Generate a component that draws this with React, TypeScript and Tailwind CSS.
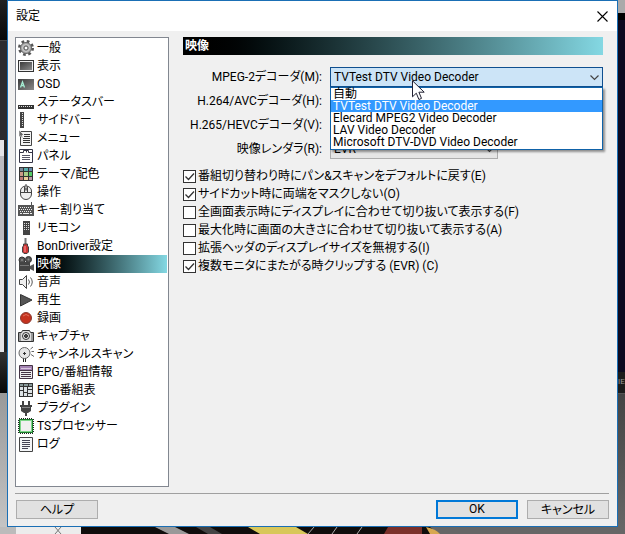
import { useState } from "react";
import type { ReactNode } from "react";

const pages: { label: string; icon: ReactNode }[] = [
  {
    label: "一般",
    icon: (
      <>
        <circle cx="8" cy="8" r="6.5" fill="none" stroke="#555" strokeWidth="3" strokeDasharray="2.6 2.5" />
        <circle cx="8" cy="8" r="5.5" fill="#aaa" stroke="#666" />
        <circle cx="8" cy="8" r="3.5" fill="none" stroke="#ccc" />
        <circle cx="8" cy="8" r="2" fill="#fff" stroke="#555" />
      </>
    ),
  },
  {
    label: "表示",
    icon: (
      <>
        <rect x="0.5" y="2.5" width="15" height="11" fill="#eee" stroke="#333" />
        <rect x="2" y="4" width="12" height="8" fill="url(#metal)" />
      </>
    ),
  },
  {
    label: "OSD",
    icon: (
      <>
        <rect y="3" width="16" height="11" fill="url(#metal)" />
        <path d="M2.500 11.500 4.500 6l2 5.500M3.200 9.700h2.600" fill="none" stroke="#a5eed4" strokeWidth="1.3" />
      </>
    ),
  },
  {
    label: "ステータスバー",
    icon: (
      <>
        <rect y="11" width="16" height="4" fill="#333" />
        <path d="M1 12.500h14" stroke="#ddd" strokeDasharray="1 1" />
      </>
    ),
  },
  {
    label: "サイドバー",
    icon: (
      <>
        <rect x="2" width="4" height="16" fill="#444" />
        <path d="M4.500 1v14" stroke="#ddd" strokeDasharray="1 1" />
      </>
    ),
  },
  {
    label: "メニュー",
    icon: (
      <>
        <path d="M2.500 1.500h11v14h-11z" fill="#f2f2f2" stroke="#444" />
        <path d="M6 4.500h6M6 6.500h6M5 8.500h7M5 10.500h7M5 12.500h7" stroke="#333" />
        <path d="m1 0 5 5-2 .3 1 2.200-1.200.5-1-2.200L1 7z" fill="#666" stroke="#fff" strokeWidth="0.6" />
      </>
    ),
  },
  {
    label: "パネル",
    icon: (
      <>
        <path d="M1.500 1.500h13v13h-13z" fill="#fff" stroke="#334" />
        <path d="M2 4.500h3.500v-2h5v2H14M8.500 2v2.500" fill="none" stroke="#334" />
        <path d="M4 7.500h8M4 9.500h8M4 11.500h8" stroke="#556" />
      </>
    ),
  },
  {
    label: "テーマ/配色",
    icon: (
      <>
        <rect x="1" y="1" width="14" height="14" fill="#333" />
        <path d="M2 2h3v3H2z" fill="#789" />
        <path d="M6 2h4v3H6z" fill="#5aa" />
        <path d="M11 2h3v3h-3z" fill="#68a" />
        <path d="M2 6h3v4H2z" fill="#c98" />
        <path d="M6 6h4v4H6z" fill="#ac8" />
        <path d="M11 6h3v4h-3z" fill="#5c6" />
        <path d="M2 11h3v3H2z" fill="#b77" />
        <path d="M6 11h4v3H6z" fill="#ec9" />
        <path d="M11 11h3v3h-3z" fill="#b9a" />
      </>
    ),
  },
  {
    label: "操作",
    icon: (
      <>
        <path d="M2.500 7a5.500 5 0 0 1 11 0v3a5.500 5.500 0 0 1-11 0z" fill="#eee" stroke="#444" />
        <path d="M2.500 8.500h11M6.500 2.500v6M9.500 2.500v6M8 0v2" fill="none" stroke="#444" />
        <path d="M8 3.500v3" stroke="#777" strokeWidth="2" />
      </>
    ),
  },
  {
    label: "キー割り当て",
    icon: (
      <>
        <path d="M13.500 4V0" stroke="#555" />
        <rect x="0" y="3" width="16" height="11" fill="#555" />
        <path d="M2 5.500h12M2 9.500h12" stroke="#eee" strokeDasharray="1 1" />
        <path d="M1 7.500h14" stroke="#eee" strokeDasharray="1 1" />
        <path d="M2 11.500h2M5 11.500h6M12 11.500h2" stroke="#eee" />
      </>
    ),
  },
  {
    label: "リモコン",
    icon: (
      <>
        <rect x="5" y="1" width="7" height="14" fill="#444" />
        <path d="M6 3.500h5M6 5.500h5M6 7.500h5M6 9.500h5" stroke="#ddd" strokeDasharray="1 1" />
      </>
    ),
  },
  {
    label: "BonDriver設定",
    icon: (
      <>
        <path d="M7.500 0v7" stroke="#777" strokeWidth="2" />
        <path d="M5.500 6h4v2l1 1v5l-1.500 1.500h-3L4.500 14V9l1-1z" fill="#c33" stroke="#444" />
        <path d="M7 8v6" stroke="#f99" />
      </>
    ),
  },
  {
    label: "映像",
    icon: (
      <>
        <circle cx="4" cy="4" r="3" fill="#555" stroke="#333" />
        <circle cx="10.500" cy="3.500" r="3" fill="#555" stroke="#333" />
        <path d="M1 6h11v9H1z" fill="#444" />
        <path d="m12 10 4-2v7l-4-2z" fill="#555" />
        <path d="M2 9.500h9" stroke="#777" />
        <circle cx="4" cy="4" r="1" fill="#888" />
        <circle cx="10.500" cy="3.500" r="1" fill="#888" />
      </>
    ),
  },
  {
    label: "音声",
    icon: (
      <>
        <path d="M1.500 5.500h3l4-4v13l-4-4h-3z" fill="#eee" stroke="#444" />
        <path d="M10.500 5.500q2 2.500 0 5M12.500 3.500q3.500 4.500 0 9" fill="none" stroke="#555" />
      </>
    ),
  },
  { label: "再生", icon: <path d="M2.500 2.500 14 8 2.500 14z" fill="#555" stroke="#333" /> },
  {
    label: "録画",
    icon: (
      <>
        <circle cx="8" cy="8" r="5.500" fill="#c5321e" stroke="#8a3a30" />
        <path d="M5 6q3-3 6 0" fill="none" stroke="#e0705a" />
      </>
    ),
  },
  {
    label: "キャプチャ",
    icon: (
      <>
        <path d="M.5 4.500h3l1-2h7l1 2h3v9H.5z" fill="#ddd" stroke="#333" />
        <path d="M2 5v8M14 5v8" stroke="#555" />
        <circle cx="8" cy="8" r="3.500" fill="#eee" stroke="#333" />
        <circle cx="8" cy="8" r="1.500" fill="#555" stroke="#222" />
      </>
    ),
  },
  {
    label: "チャンネルスキャン",
    icon: (
      <>
        <circle cx="6.500" cy="7" r="5.500" fill="#e6e6e6" stroke="#666" />
        <path d="M5 7.500h3M6.500 6v3" stroke="#333" />
        <path d="M5.500 12.500V16M7.500 12.500V16" stroke="#222" />
        <path d="m12.500 3 2.500-2M13.500 5.500H16M13 8.500l3 2" stroke="#666" />
      </>
    ),
  },
  {
    label: "EPG/番組情報",
    icon: (
      <>
        <path d="M1.500 1.500h13v13h-13z" fill="#eee" stroke="#434" />
        <path d="M2 2h12v4H2z" fill="#a584b4" />
        <path d="M1 6.500h14M3 8.500h10M3 10.500h10M3 12.500h10" stroke="#434" />
        <path d="M3 4.500h10" stroke="#d9c7e0" />
      </>
    ),
  },
  {
    label: "EPG番組表",
    icon: (
      <>
        <rect x="1" y="1" width="14" height="14" fill="#333" />
        <path d="M2 2h3v2H2zM6 2h4v2H6zM11 2h3v2h-3z" fill="#899" />
        <path d="M2 5h3v3H2zM2 9h3v5H2zM6 5h3v5H6zM6 11h3v3H6zM10 5h4v2h-4zM10 8h4v3h-4zM10 12h4v2h-4z" fill="#dde3e6" />
      </>
    ),
  },
  {
    label: "プラグイン",
    icon: (
      <>
        <path d="M5 1v4M11 1v4" stroke="#444" strokeWidth="2" />
        <path d="M2 5h12v2h-1v4l-3 2H9v3H7v-3H6l-3-2V7H2z" fill="#444" />
        <path d="M4 7.500h8" stroke="#888" />
      </>
    ),
  },
  {
    label: "TSプロセッサー",
    icon: (
      <>
        <rect x="1" y="1" width="14" height="14" fill="none" stroke="#222" strokeWidth="2" strokeDasharray="1 1" />
        <rect x="1.500" y="1.500" width="13" height="13" fill="#7ed68a" stroke="#1d7a2c" />
        <rect x="3" y="3" width="10" height="10" fill="#f0f0f0" />
      </>
    ),
  },
  {
    label: "ログ",
    icon: (
      <>
        <path d="M1.500 1.500h13v14h-13z" fill="#f4f6f8" stroke="#444" />
        <path d="M4 4.500h8M4 6.500h8M4 8.500h8M4 10.500h8M4 12.500h6" stroke="#445" />
      </>
    ),
  },
];

const decoders = [
  "自動",
  "TVTest DTV Video Decoder",
  "Elecard MPEG2 Video Decoder",
  "LAV Video Decoder",
  "Microsoft DTV-DVD Video Decoder",
];

const options = [
  { label: "番組切り替わり時にパン&スキャンをデフォルトに戻す(E)", checked: true },
  { label: "サイドカット時に両端をマスクしない(O)", checked: true },
  { label: "全画面表示時にディスプレイに合わせて切り抜いて表示する(F)", checked: false },
  { label: "最大化時に画面の大きさに合わせて切り抜いて表示する(A)", checked: false },
  { label: "拡張ヘッダのディスプレイサイズを無視する(I)", checked: false },
  { label: "複数モニタにまたがる時クリップする (EVR) (C)", checked: true },
];

function Chevron() {
  return (
    <svg viewBox="0 0 9 6" className="pointer-events-none absolute right-1 top-2 h-[6px] w-[9px]" aria-hidden="true">
      <path d="m.5.5 4 4 4-4" fill="none" stroke="#444" strokeWidth="1.2" />
    </svg>
  );
}

function Sidebar() {
  const [selected, setSelected] = useState("映像");

  return (
    <nav className="w-[154px] shrink-0 border border-[#828790] bg-white py-px pl-0.5 pr-px">
      <ul>
        {pages.map(({ label, icon }) => (
          <li key={label}>
            <button
              type="button"
              onClick={() => setSelected(label)}
              className="flex h-[18px] w-full items-center gap-0.5 text-left"
            >
              <svg viewBox="0 0 16 16" className="h-4 w-4 shrink-0" aria-hidden="true">
                {icon}
              </svg>
              <span
                className={
                  selected === label
                    ? "flex-1 whitespace-nowrap bg-linear-to-r from-black to-[#84d8e3] pl-px leading-[18px] text-white"
                    : "flex-1 whitespace-nowrap pl-px leading-[18px]"
                }
              >
                {label}
              </span>
            </button>
          </li>
        ))}
      </ul>
    </nav>
  );
}

function VideoPage() {
  const [decoder, setDecoder] = useState(decoders[1]);

  return (
    <section className="min-w-0 flex-1">
      <h2 className="h-[18px] bg-linear-to-r from-black to-[#84d8e3] pl-0.5 font-bold leading-[18px] text-white">映像</h2>

      <div className="mt-3 grid grid-cols-[139px_1fr] items-center gap-x-2 gap-y-1">
        <label htmlFor="mpeg2" className="text-right">MPEG-2デコーダ(M):</label>
        <div className="relative">
          <select
            id="mpeg2"
            value={decoder}
            onChange={(e) => setDecoder(e.target.value)}
            className="block h-5 w-full appearance-none border border-[#0f4f8f] bg-[#cce4f7] pl-[3px] outline-none"
          >
            {decoders.map((name) => (
              <option key={name}>{name}</option>
            ))}
          </select>
          <Chevron />
          {/* Opened list */}
          <ul
            role="listbox"
            className="absolute left-0 top-full z-10 w-full border border-[#0f62a8] bg-white pb-px leading-3 shadow-[2px_2px_2px_rgba(0,0,0,0.4)]"
          >
            {decoders.map((name) => (
              <li
                key={name}
                role="option"
                aria-selected={name === decoder}
                onClick={() => setDecoder(name)}
                className={name === decoder ? "h-3 bg-[#3399ff] pl-0.5 text-white" : "h-3 pl-0.5"}
              >
                {name}
              </li>
            ))}
          </ul>
          {/* Mouse pointer */}
          <svg viewBox="0 0 13 21" className="pointer-events-none absolute left-[82px] top-[13px] z-20 h-[21px] w-[13px]" aria-hidden="true">
            <path d="M.5.8v16l3.800-3.600 2.600 6.300 2.600-1.100-2.600-6.200h5.300z" fill="#fff" stroke="#223" />
          </svg>
        </div>

        <label htmlFor="h264" className="text-right">H.264/AVCデコーダ(H):</label>
        <select id="h264" className="h-5 w-full appearance-none border border-[#adadad] bg-[#e1e1e1]" />

        <label htmlFor="h265" className="text-right">H.265/HEVCデコーダ(V):</label>
        <select id="h265" className="h-5 w-full appearance-none border border-[#adadad] bg-[#e1e1e1]" />

        <label htmlFor="renderer" className="text-right">映像レンダラ(R):</label>
        <div className="relative w-[168px]">
          <select id="renderer" className="block h-5 w-full appearance-none border border-[#adadad] bg-[#e5e5e5] pl-[3px]">
            <option>EVR</option>
          </select>
          <Chevron />
        </div>
      </div>

      <div className="mt-2">
        {options.map(({ label, checked }) => (
          <label key={label} className="flex h-[18px] items-center gap-0.5 whitespace-nowrap">
            <span className="relative flex">
              <input
                type="checkbox"
                defaultChecked={checked}
                className="peer h-[13px] w-[13px] appearance-none border border-[#333] bg-white"
              />
              <svg viewBox="0 0 13 13" className="pointer-events-none absolute inset-0 hidden peer-checked:block" aria-hidden="true">
                <path d="m2.500 6.500 3 3 5.500-6" fill="none" stroke="#333" strokeWidth="1.3" />
              </svg>
            </span>
            {label}
          </label>
        ))}
      </div>
    </section>
  );
}

export default function App() {
  return (
    <div className="flex min-h-screen flex-col bg-[#777] font-['Roboto','Noto_Sans_CJK_JP',sans-serif] text-xs leading-4 text-black [font-feature-settings:'palt']">
      {/* Shared fill for the screen icons */}
      <svg width="0" height="0" className="absolute" aria-hidden="true">
        <linearGradient id="metal" x2="1" y2="1">
          <stop stopColor="#3b3b3b" />
          <stop offset="1" stopColor="#8a8a8a" />
        </linearGradient>
      </svg>

      <div className="flex flex-1">
        {/* Windows behind, left edge */}
        <div className="flex w-[7px] flex-col">
          <div className="h-10 bg-linear-to-b from-[#222] to-[#080808]" />
          <div className="h-[100px] border-t border-[#444] bg-[#2b2b2e]" />
          <div className="h-4 border-r-3 border-[#222] bg-[#e4e4e8]" />
          <div className="h-[84px] border-r-3 border-[#222] bg-[#bbbbc0]" />
          <div className="h-28 border-r-3 border-[#222] bg-[#e4e4e8]" />
          <div className="h-[41px] bg-linear-to-b from-[#333] to-[#080808]" />
          <div className="flex-1 bg-linear-to-b from-[#999] to-[#c4c4c4]" />
        </div>

        <main className="flex min-w-0 flex-1 flex-col border border-[#1a6fb5] bg-[#f0f0f0]">
          <header className="flex h-[30px] items-center justify-between bg-white pl-2 pr-[9px]">
            <h1>設定</h1>
            <button type="button" aria-label="閉じる">
              <svg viewBox="0 0 11 11" className="h-[11px] w-[11px]" aria-hidden="true">
                <path d="m.5.5 10 10m0-10-10 10" stroke="#000" strokeWidth="1.1" />
              </svg>
            </button>
          </header>

          <div className="flex flex-1 gap-3.5 pb-1.5 pl-[7px] pr-3.5 pt-1.5">
            <Sidebar />
            <VideoPage />
          </div>

          <footer className="ml-[7px] mr-2 flex justify-end gap-[9px] border-t border-[#a0a0a0] pb-[7px] pl-px pt-1.5">
            <button type="button" className="mr-auto h-[19px] w-[82px] border border-[#adadad] bg-[#e1e1e1]">ヘルプ</button>
            <button type="button" className="h-[19px] w-[82px] border-2 border-[#0078d7] bg-[#e1e1e1] leading-[15px]">OK</button>
            <button type="button" className="h-[19px] w-[82px] border border-[#adadad] bg-[#e1e1e1]">キャンセル</button>
          </footer>
        </main>

        {/* Windows behind, right edge */}
        <div className="flex w-[7px] flex-col overflow-hidden">
          <div className="h-[13px] bg-[#aaa]" />
          <div className="h-[7px] bg-black" />
          <div className="h-[352px] bg-[#0c0a20]" />
          <div className="h-[22px] border-b border-[#555] bg-[#1c1c1c] text-[8px] leading-5 text-[#999]">IE</div>
          <div className="flex-1 bg-linear-to-b from-[#444] to-[#666]" />
        </div>
      </div>

      {/* Wallpaper below the dialog */}
      <svg viewBox="0 0 625 7" preserveAspectRatio="none" className="block h-[7px] w-full" aria-hidden="true">
        <path d="M0 0h625v7H0z" fill="#666" />
        <path d="M0 0h16v7H0z" fill="#bbb" />
        <path d="M16 0h65v7H16z" fill="#ececec" />
        <path d="m55 0 6 7m0-7-6 7" stroke="#777" />
        <path d="M81 0h349l8 7H81z" fill="#100d0c" />
        <path d="M155 0h20l14 7h-20z" fill="#999" />
        <path d="M196 0h14l12 7h-14z" fill="#444" />
        <path d="M248 0h48l12 7h-48z" fill="#d8c75a" />
        <path d="m314 0-6 7M337 0l-5 7M362 0l-5 7" stroke="#aaa" />
        <path d="M388 0h34v7h-38z" fill="#7b302a" />
        <path d="M426 0q10 2 14 7h-10z" fill="#d8a850" />
      </svg>
    </div>
  );
}
